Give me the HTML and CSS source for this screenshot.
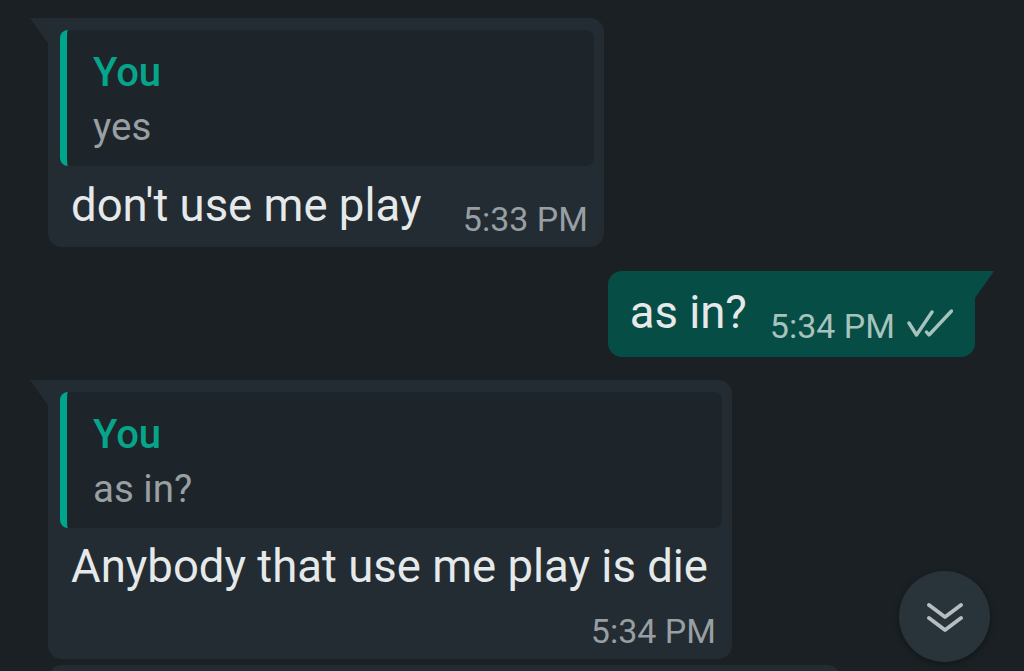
FILE: index.html
```html
<!DOCTYPE html>
<html lang="en">
<head>
  <meta charset="UTF-8">
  <meta name="viewport" content="width=device-width, initial-scale=1.0">
  <title>Chat</title>
  <link rel="stylesheet" href="styles.css">
</head>
<body>
  <main class="chat">
    <div class="msg in tail first-reply">
      <div class="quote">
        <div class="quote-name">You</div>
        <div class="quote-text">yes</div>
      </div>
      <div class="line">
        <span class="text">don't use me play</span>
        <span class="meta"><span class="time">5:33 PM</span></span>
      </div>
    </div>

    <div class="msg out tail">
      <div class="line">
        <span class="text">as in?</span>
        <span class="meta">
          <span class="time">5:34 PM</span>
          <svg class="ticks" viewBox="0 0 46 30" width="46" height="30">
            <path d="M2 15 L9.5 27 L25 4" />
            <path d="M19.5 24 L22 27 L44.5 3" />
          </svg>
        </span>
      </div>
    </div>

    <div class="msg in tail second-reply">
      <div class="quote">
        <div class="quote-name">You</div>
        <div class="quote-text">as in?</div>
      </div>
      <div class="line">
        <span class="text">Anybody that use me play is die</span>
        <span class="meta"><span class="time">5:34 PM</span></span>
      </div>
    </div>

    <div class="msg in cont next-msg"></div>
  </main>

  <button class="scroll-down" aria-label="Scroll to bottom">
    <svg viewBox="0 0 36 30" width="36" height="30">
      <path d="M2 2 L18 14 L34 2" />
      <path d="M2 15 L18 27 L34 15" />
    </svg>
  </button>
</body>
</html>
```

FILE: styles.css
```css
body {
  margin: 0;
  height: 671px;
  overflow: hidden;
  background-color: #1a2023;
  font-family: Roboto, "Noto Sans", sans-serif;
  color: #e6e9ea;
}

.chat {
  display: flex;
  flex-direction: column;
  padding-top: 18px;
}

/* Bubbles */
.msg {
  position: relative;
  box-sizing: border-box;
  border-radius: 14px;
  margin-top: 23px;
}

.msg:first-child {
  margin-top: 0;
}

.msg.in {
  align-self: flex-start;
  margin-left: 48px;
  background-color: #222c32;
  padding: 12px 10px 8px 12px;
}

.msg.out {
  align-self: flex-end;
  margin-right: 49px;
  margin-top: 24px;
  background-color: #064d45;
  padding: 16px 22px 11px 22px;
}

.msg.in.tail {
  border-top-left-radius: 0;
}

.msg.out.tail {
  border-top-right-radius: 0;
}

.msg.tail::before {
  content: "";
  position: absolute;
  top: 0;
  width: 19px;
  height: 27px;
  background-color: inherit;
}

.msg.in.tail::before {
  left: -18px;
  clip-path: polygon(0 0, 100% 0, 100% 100%);
}

.msg.out.tail::before {
  right: -19px;
  clip-path: polygon(0 0, 100% 0, 0 100%);
}

.msg.cont {
  margin-top: 6px;
}

.first-reply {
  width: 556px;
}

.second-reply {
  width: 684px;
}

.next-msg {
  width: 793px;
  height: 90px;
}

/* Quoted reply */
.quote {
  background-color: #1d252a;
  border-radius: 8px;
  border-left: 7px solid #00a68b;
  padding: 19px 16px 17px 26px;
  margin-bottom: 14px;
}

.second-reply .quote {
  margin-bottom: 13px;
}

.quote-name {
  color: #06a58b;
  font-size: 40px;
  font-weight: 500;
  line-height: 48px;
  margin-bottom: 8px;
}

.quote-text {
  color: #999fa3;
  font-size: 38.5px;
  line-height: 44px;
}

/* Text + time row */
.line {
  display: flex;
  flex-wrap: wrap;
  align-items: flex-end;
  column-gap: 26px;
  padding: 0 6px 0 11px;
}

.msg.out .line {
  padding: 0;
  column-gap: 23px;
}

.text {
  font-size: 45.5px;
  line-height: 52px;
  white-space: nowrap;
  margin-bottom: 7px;
}

.meta {
  display: flex;
  align-items: baseline;
  margin-left: auto;
  margin-top: 11px;
  font-size: 34px;
  line-height: 40px;
  color: #989fa3;
  white-space: nowrap;
}

.msg.out .meta {
  color: #a6c3be;
}

.ticks {
  margin-left: 12px;
  fill: none;
  stroke: #a6c3be;
  stroke-width: 3.4;
  stroke-linecap: round;
  stroke-linejoin: round;
}

/* Floating scroll button */
.scroll-down {
  position: fixed;
  right: 34px;
  bottom: 9px;
  width: 91px;
  height: 91px;
  border: none;
  border-radius: 50%;
  background-color: #29343a;
  box-shadow: 0 2px 6px rgba(0, 0, 0, 0.35);
  display: flex;
  align-items: center;
  justify-content: center;
  padding: 0;
  padding-top: 2px;
  cursor: pointer;
}

.scroll-down svg {
  fill: none;
  stroke: #b7bec2;
  stroke-width: 3.8;
  stroke-linecap: round;
  stroke-linejoin: round;
}
```
